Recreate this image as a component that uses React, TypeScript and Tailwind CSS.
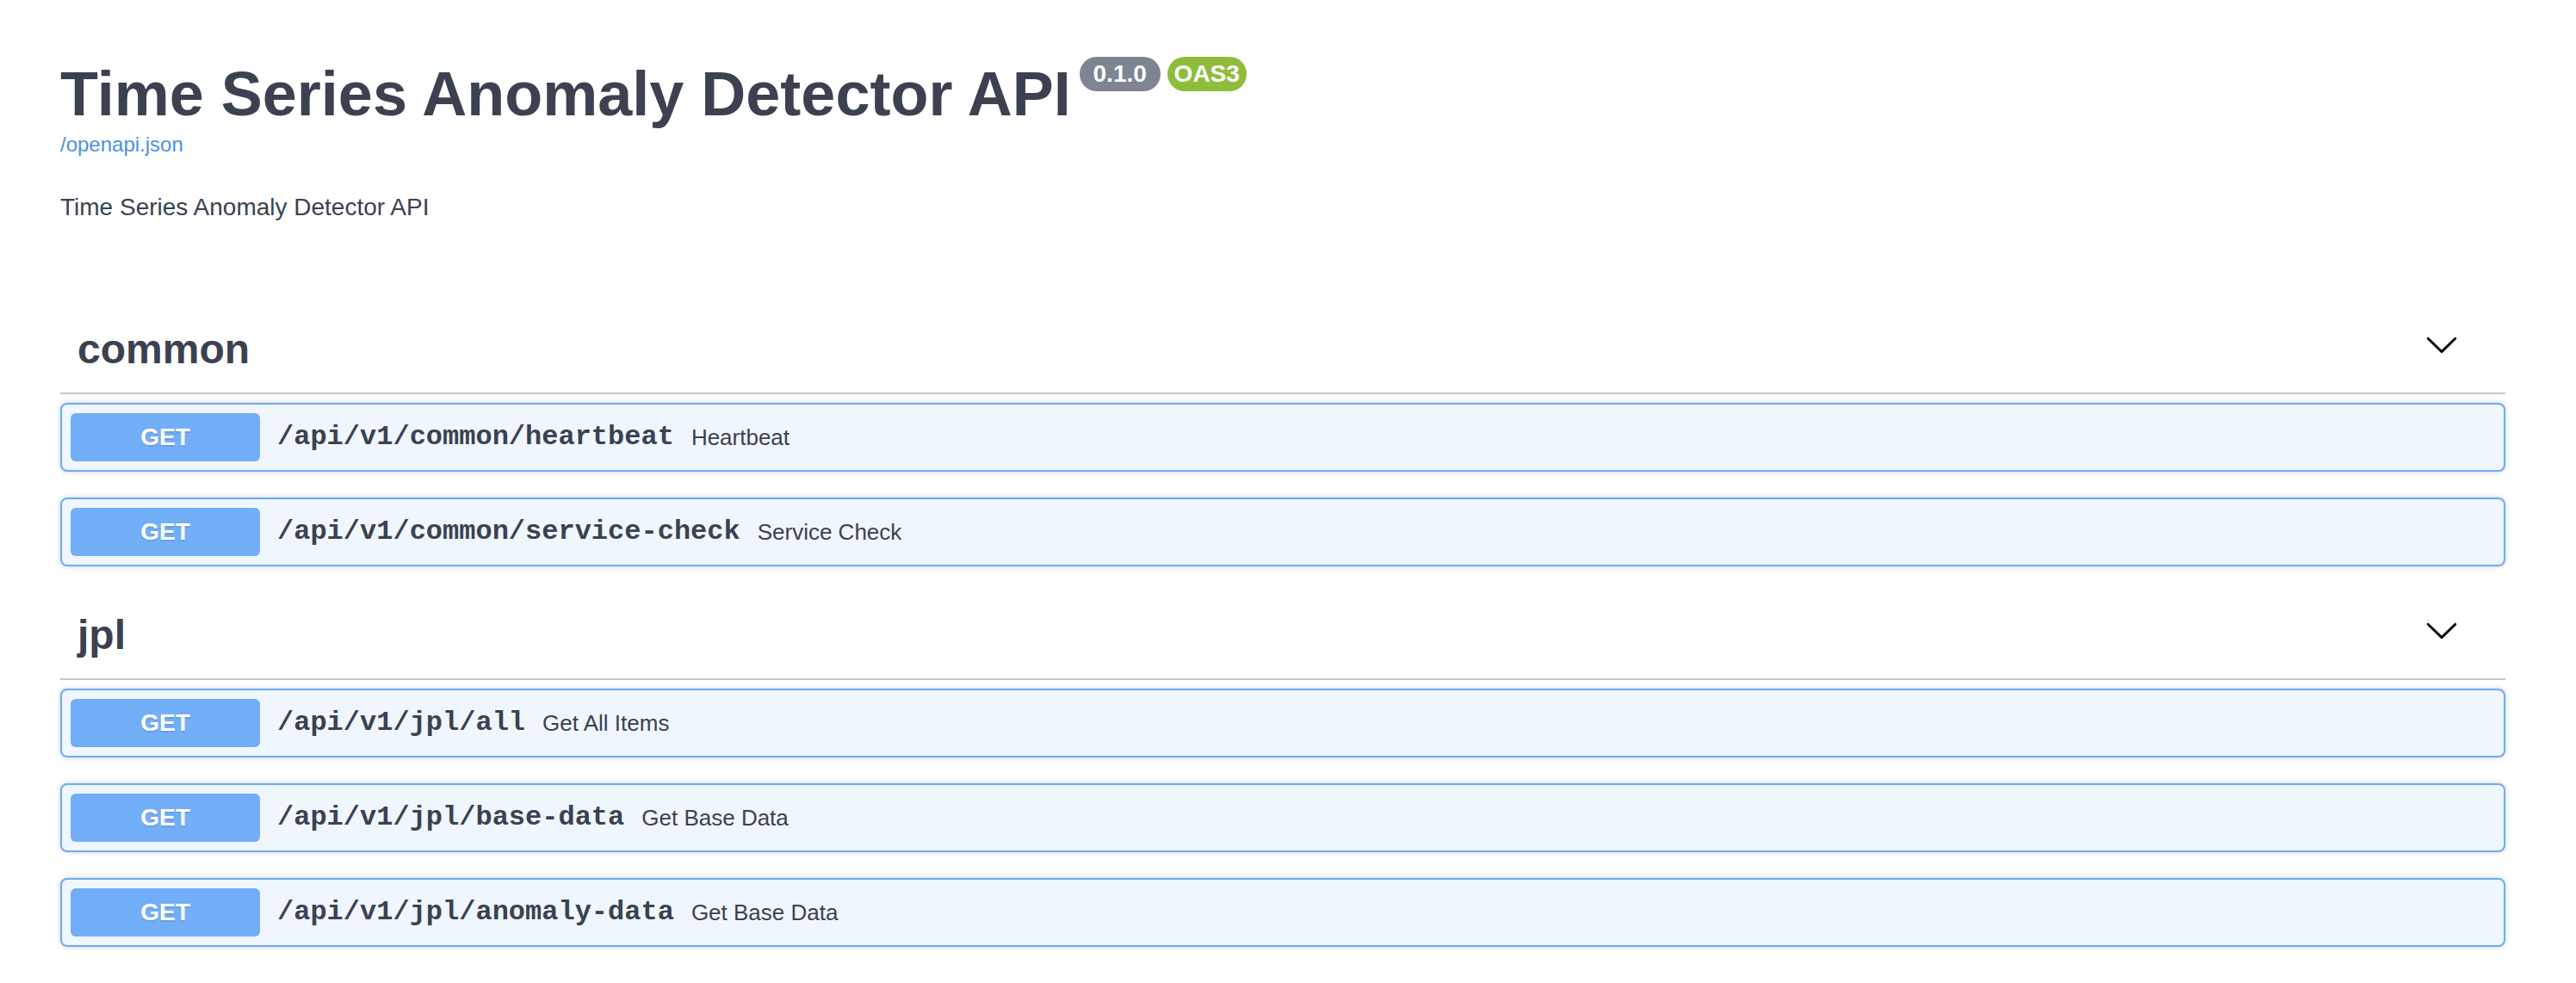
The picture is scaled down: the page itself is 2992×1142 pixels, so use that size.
import React from "react";

type Op = { path: string; summary: string };
type Section = { tag: string; ops: Op[] };

const sections: Section[] = [
  {
    tag: "common",
    ops: [
      { path: "/api/v1/common/heartbeat", summary: "Heartbeat" },
      { path: "/api/v1/common/service-check", summary: "Service Check" },
    ],
  },
  {
    tag: "jpl",
    ops: [
      { path: "/api/v1/jpl/all", summary: "Get All Items" },
      { path: "/api/v1/jpl/base-data", summary: "Get Base Data" },
      { path: "/api/v1/jpl/anomaly-data", summary: "Get Base Data" },
    ],
  },
];

function Chevron() {
  return (
    <svg
      className="w-[40px] h-[40px] mt-[4px] mr-[14px] shrink-0"
      viewBox="0 0 20 20"
      aria-hidden="true"
    >
      <path
        fill="#000"
        d="M17.418 6.109c.272-.268.709-.268.979 0s.271.701 0 .969l-7.908 7.83c-.27.268-.707.268-.979 0l-7.908-7.83c-.27-.268-.27-.701 0-.969.271-.268.709-.268.979 0L10 13.25l7.418-7.141z"
      />
    </svg>
  );
}

function OpBlock({ op }: { op: Op }) {
  return (
    <div className="mb-[30px] rounded-[8px] border-2 border-[#6aacf8] bg-[#eff6fe] shadow-[0_0_6px_rgba(0,0,0,0.19)]">
      <div className="flex items-center p-[10px]">
        <span className="flex h-[56px] w-[220px] shrink-0 items-center justify-center rounded-[6px] bg-[#72aef7] text-[28px] font-bold text-white [text-shadow:0_2px_0_rgba(0,0,0,0.1)]">
          GET
        </span>
        <span className="px-[20px] font-['Liberation_Mono',monospace] text-[32px] font-bold text-[#3b4151]">
          {op.path}
        </span>
        <span className="flex-1 text-[26px] text-[#3b4151]">{op.summary}</span>
      </div>
    </div>
  );
}

export default function App() {
  return (
    <div className="min-h-[1142px] bg-white font-['Liberation_Sans',Arial,sans-serif] text-[#3b4151]">
      <div className="ml-[70px] w-[2840px] pt-[68px]">
        <div className="flex items-start">
          <h2 className="m-0 text-[72px] font-bold leading-[83px] text-[#3b4151]">
            Time Series Anomaly Detector API
          </h2>
          <span className="ml-[10px] mt-[-2px] whitespace-pre rounded-[114px] bg-[#7d8492] px-[8px] py-[4px] text-[28px] font-bold leading-[32px] text-white">
            {" 0.1.0 "}
          </span>
          <span className="ml-[8px] mt-[-2px] whitespace-pre rounded-[114px] bg-[#8dbd3a] px-[8px] py-[4px] text-[28px] font-bold leading-[32px] text-white">
            OAS3
          </span>
        </div>
        <div className="mt-[3px] text-[24px] leading-[28px] text-[#4990e2]">
          <a href="#">/openapi.json</a>
        </div>
        <p className="mt-[38px] text-[28px] leading-[42px] text-[#3b4151]">
          Time Series Anomaly Detector API
        </p>

        <div className="mt-[94px]">
          {sections.map((s) => (
            <div key={s.tag} className="flex flex-col">
              <div className="flex items-start border-b-2 border-[#c4c6cb] py-[20px] pl-[20px] pr-[40px]">
                <h3 className="flex-1 text-[48px] font-bold leading-[60px] text-[#3b4151]">
                  {s.tag}
                </h3>
                <Chevron />
              </div>
              <div className="mt-[10px]">
                {s.ops.map((op) => (
                  <OpBlock key={op.path} op={op} />
                ))}
              </div>
            </div>
          ))}
        </div>
      </div>
    </div>
  );
}
